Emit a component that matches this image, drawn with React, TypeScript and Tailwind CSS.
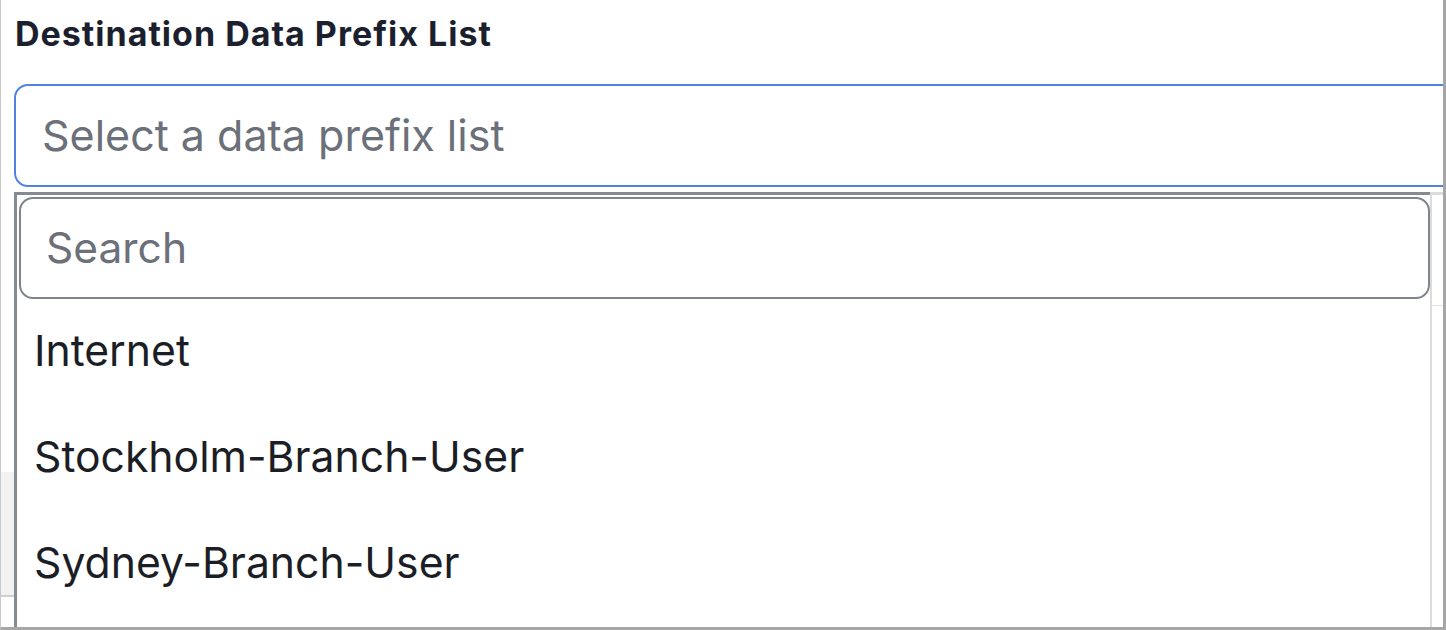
const OPTIONS = ['Internet', 'Stockholm-Branch-User', 'Sydney-Branch-User'];

export default function App() {
  return (
    <div
      className="w-[1446px] h-[630px] overflow-hidden bg-white border-l border-r-[3px] border-b-[3px] border-l-[#c9c9c9] border-r-[#a6a6a6] border-b-[#a6a6a6] flex flex-col"
      style={{ fontFamily: 'Inter, "Noto Sans", sans-serif' }}
    >
      <label className="block pl-[14px] pt-[14px] h-[84px] text-[34px] font-bold leading-[40px] text-[#1b1f2e] tracking-[1px]">
        Destination Data Prefix List
      </label>

      <div className="ml-[13px] -mr-[20px] h-[103px] flex items-center rounded-[14px] border-2 border-[#4f82e3] pl-[26px]">
        <span className="text-[43px] text-[#6b7079]">Select a data prefix list</span>
      </div>

      <div className="mt-[5px] flex flex-1 min-h-0">
        <div className="w-[13px] flex flex-col">
          <div className="h-[280px]" />
          <div className="h-[125px] bg-[#f2f2f2] border-b-2 border-[#cfcfcf]" />
        </div>

        <div className="flex-1 flex border-l-[3px] border-[#868b93]">
          <div className="flex-1 border-t-[3px] border-[#868b93] pl-[2px] pt-[2px]">
            <div className="h-[102px] flex items-center rounded-[14px] border-2 border-[#80858d] pl-[25px]">
              <span className="text-[42.5px] text-[#6b7079]">Search</span>
            </div>
            {OPTIONS.map(option => (
              <div key={option} className="h-[107px] -mt-[1px] first:mt-0 flex items-center pl-[15px] text-[42.7px] text-[#1c1e26]">
                {option}
              </div>
            ))}
          </div>
          <div className="w-[13px] border-t-[3px] border-l-2 border-[#dcdcdc] pt-[110px]">
            <div className="border-t border-[#e2e2e2]" />
          </div>
        </div>
      </div>
    </div>
  );
}
